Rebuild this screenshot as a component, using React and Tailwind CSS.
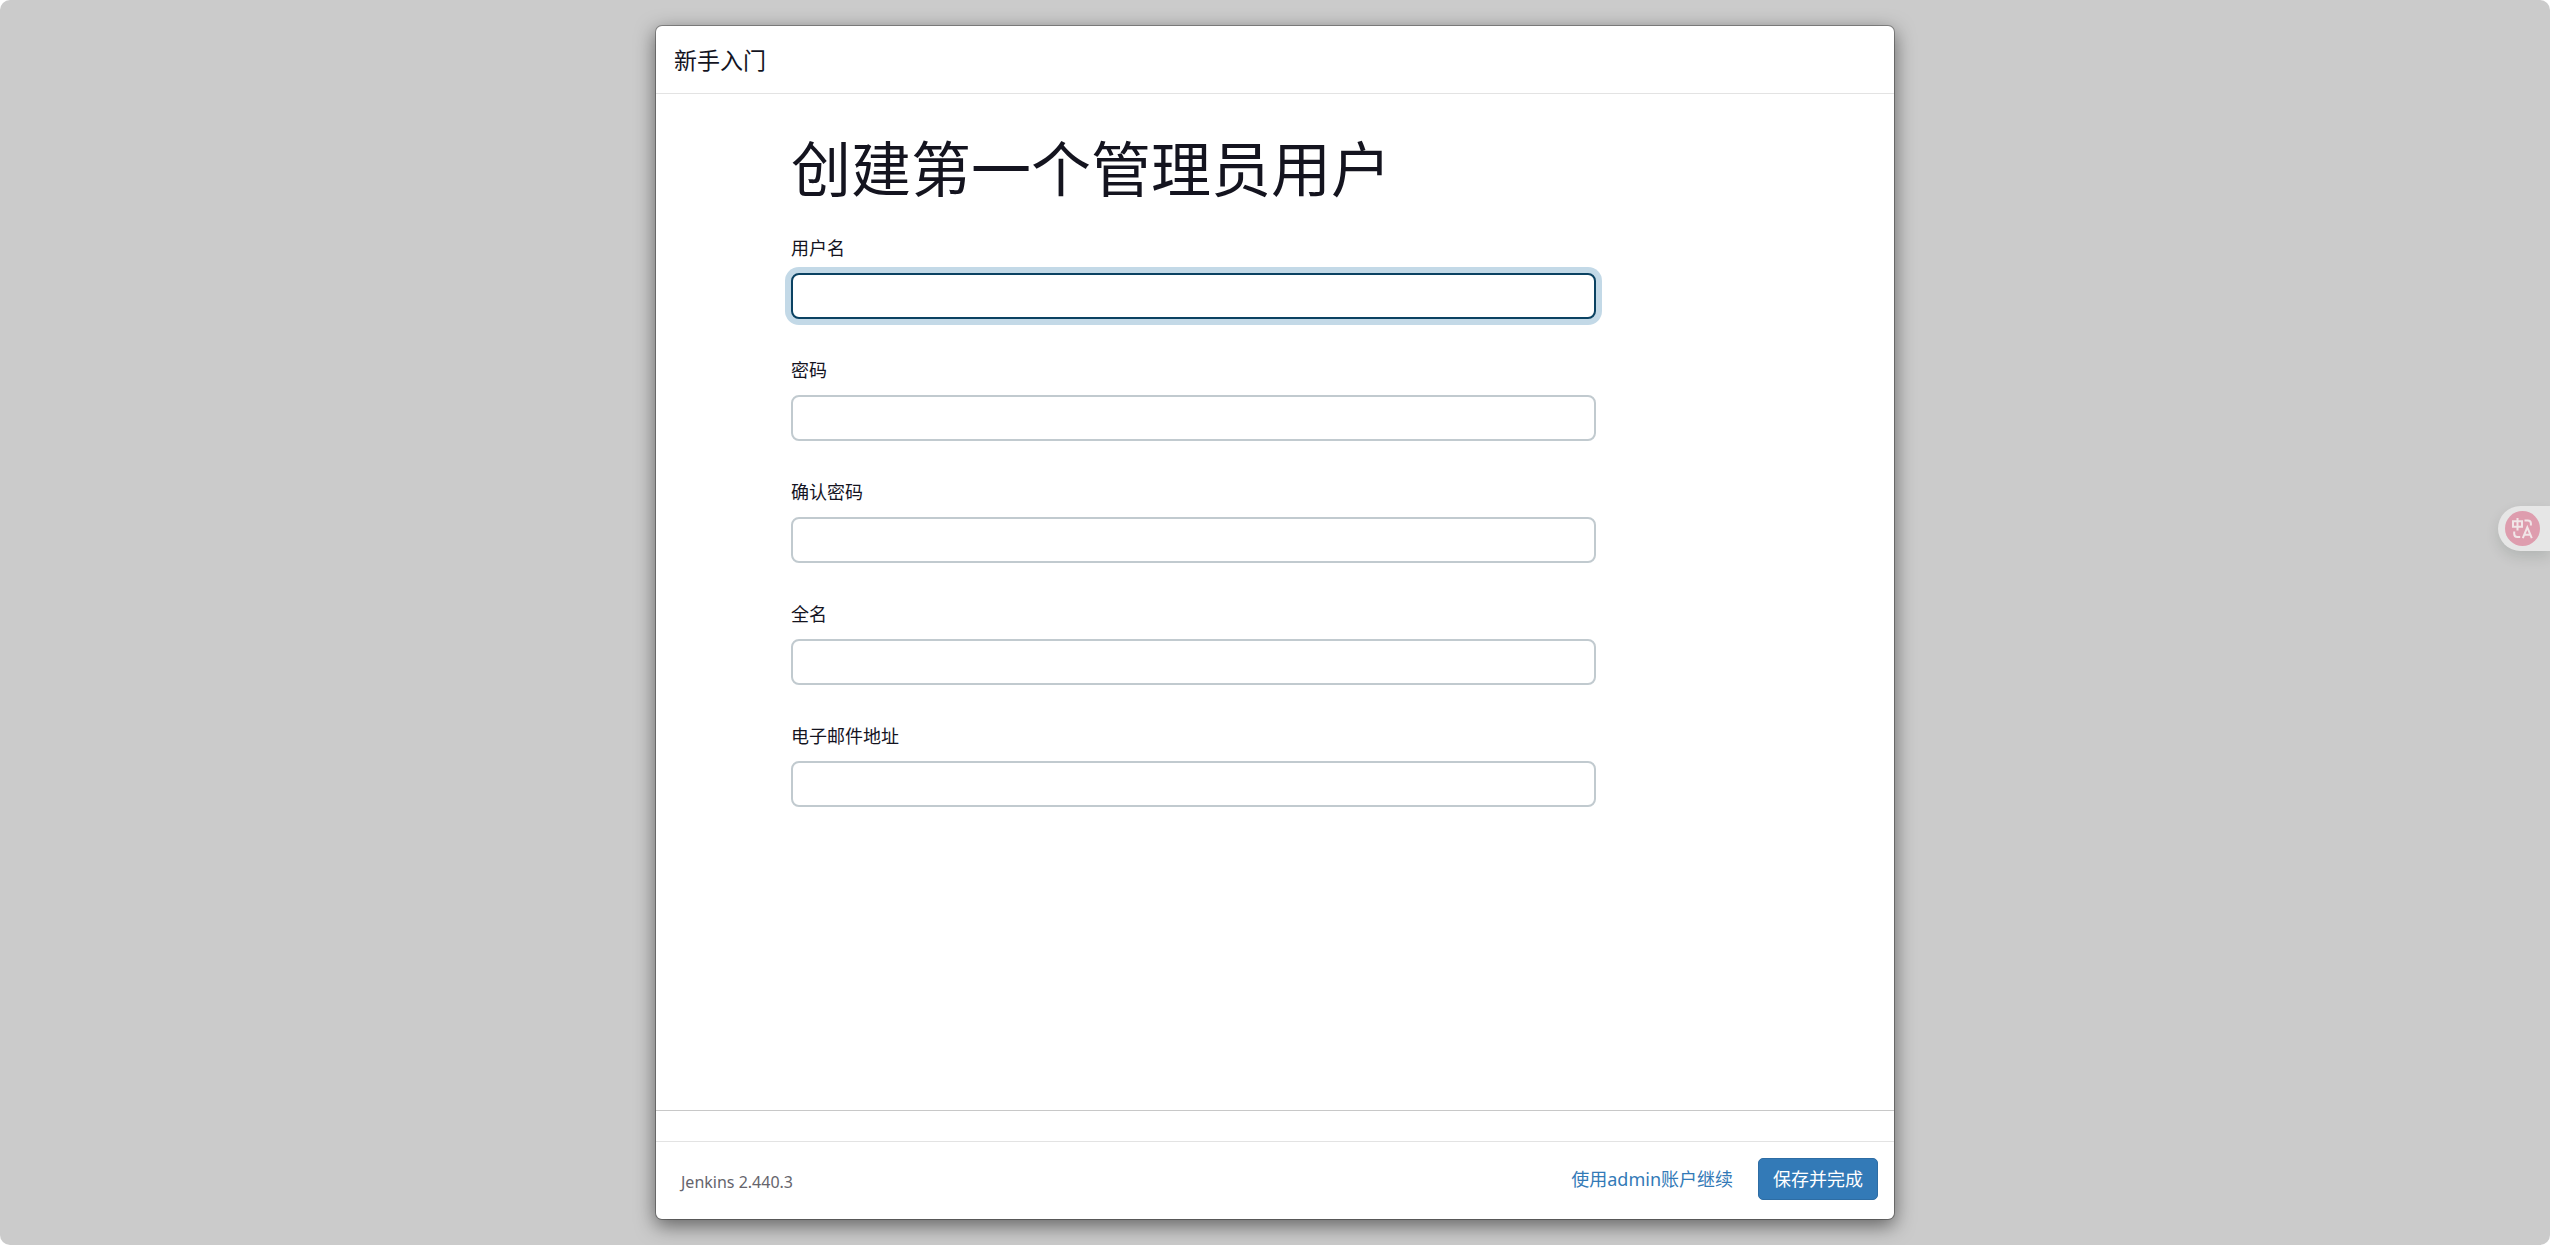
const fields = [
  { id: "username", label: "用户名", type: "text", autoFocus: true },
  { id: "password", label: "密码", type: "password" },
  { id: "confirm", label: "确认密码", type: "password" },
  { id: "fullname", label: "全名", type: "text" },
  { id: "email", label: "电子邮件地址", type: "email" },
];

function Field({ id, label, type, autoFocus }) {
  return (
    <div className="flex flex-col gap-[13px]">
      <label htmlFor={id} className="text-[18px] leading-6">
        {label}
      </label>
      <input
        id={id}
        name={id}
        type={type}
        autoFocus={autoFocus}
        autoComplete="off"
        className="h-[46px] w-full rounded-lg border-2 border-[#c1cacf] bg-white px-3 text-[18px] caret-transparent outline-none focus:border-[#0b4262] focus:ring-6 focus:ring-[#c3d9e7]"
      />
    </div>
  );
}

function TranslateButton() {
  return (
    <button
      type="button"
      aria-label="翻译"
      className="fixed top-[506px] right-0 flex h-[45px] w-[52px] items-center rounded-l-full bg-[#e6e6e6] pl-[7px] shadow-[0_6px_14px_rgba(0,30,20,0.12)]"
    >
      <svg width="35" height="35" viewBox="0 0 35 35" fill="none" aria-hidden="true">
        <circle cx="17.5" cy="17.5" r="17.5" fill="#de9dae" />
        <g stroke="#f1e6e8" strokeWidth="2">
          <path d="M8 10.2h9v5.6H8zM12.5 7v12.5" />
          <path d="M19.5 9.4h3.2q3.2 0 3.2 3.2v2" />
          <path d="M9.2 20.5v2.2q0 3.2 3.2 3.2h2.8" />
          <path d="M17.8 27.2 22.3 16.4 26.8 27.2M19.4 23.8h5.8" />
        </g>
      </svg>
    </button>
  );
}

export default function App() {
  return (
    <div className="bg-white font-['Noto_Sans','Noto_Sans_CJK_SC',sans-serif] text-[#14141f]">
      <div className="flex h-screen min-h-[1000px] justify-center rounded-[10px] bg-[#cbcbcb] py-[25px]">
        <main className="flex w-full max-w-[1240px] flex-col rounded-[7px] border border-black/30 bg-white bg-clip-padding shadow-[0_6px_19px_rgba(0,0,0,0.5)]">
          <header className="flex h-[68px] shrink-0 items-center border-b border-[#e3e3e3] px-[18px]">
            <h4 className="text-[23px] leading-8">新手入门</h4>
          </header>
          <div className="flex-1 border-b border-[#c8c8c8] px-[135px] pt-[35px]">
            <h1 className="text-[60px] leading-[80px]">创建第一个管理员用户</h1>
            <form className="mt-[27px] flex max-w-[805px] flex-col gap-[39px]">
              {fields.map((f) => (
                <Field key={f.id} {...f} />
              ))}
            </form>
          </div>
          <footer className="mt-[30px] flex h-[78px] shrink-0 items-center border-t border-[#e3e3e3] pr-4 pb-[3px] pl-[25px]">
            <span className="flex-1 pt-[6px] text-[16px] text-[#65646c]">Jenkins 2.440.3</span>
            <a href="#" className="mr-[25px] text-[18px] text-[#337ab7]">
              使用admin账户继续
            </a>
            <button
              type="button"
              className="h-[42px] rounded-[5px] border border-[#2e6da4] bg-[#337ab7] px-[14px] text-[18px] leading-6 text-white"
            >
              保存并完成
            </button>
          </footer>
        </main>
      </div>
      <TranslateButton />
    </div>
  );
}
